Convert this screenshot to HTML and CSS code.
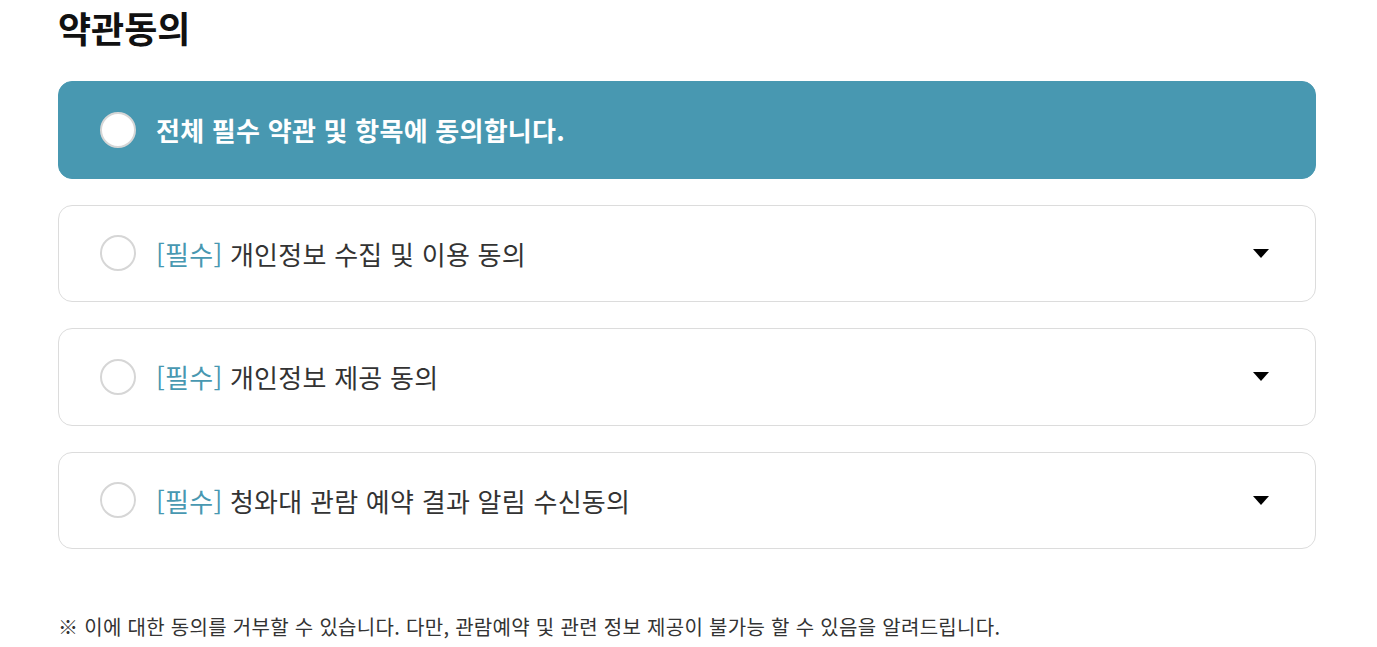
FILE: index.html
```html
<!DOCTYPE html>
<html lang="ko">
<head>
    <meta charset="UTF-8">
    <meta name="viewport" content="width=device-width, initial-scale=1.0">
    <title>약관동의</title>
    <link rel="stylesheet" href="styles.css">
</head>
<body>
    <div class="container">
        <h2 class="title">약관동의</h2>

        <div class="agree-list">
            <label class="agree-item all">
                <span class="check"></span>
                <span class="agree-text">전체 필수 약관 및 항목에 동의합니다.</span>
            </label>

            <div class="agree-item">
                <span class="check"></span>
                <span class="agree-text"><em>[필수]</em> 개인정보 수집 및 이용 동의</span>
                <span class="arrow"></span>
            </div>

            <div class="agree-item">
                <span class="check"></span>
                <span class="agree-text"><em>[필수]</em> 개인정보 제공 동의</span>
                <span class="arrow"></span>
            </div>

            <div class="agree-item">
                <span class="check"></span>
                <span class="agree-text"><em>[필수]</em> 청와대 관람 예약 결과 알림 수신동의</span>
                <span class="arrow"></span>
            </div>
        </div>

        <p class="notice">※ 이에 대한 동의를 거부할 수 있습니다. 다만, 관람예약 및 관련 정보 제공이 불가능 할 수 있음을 알려드립니다.</p>
    </div>
</body>
</html>
```

FILE: styles.css
```css
* {
    margin: 0;
    padding: 0;
    box-sizing: border-box;
}

body {
    font-family: 'Noto Sans CJK KR', 'Noto Sans', sans-serif;
    background: #fff;
    color: #222;
}

.container {
    width: 1258px;
    margin-left: 58px;
}

.title {
    font-size: 36px;
    font-weight: 700;
    color: #111;
    line-height: 54px;
    margin-bottom: 27px;
}

.agree-list {
    display: flex;
    flex-direction: column;
    gap: 26px;
}

.agree-item {
    display: flex;
    align-items: center;
    height: 97.5px;
    padding: 0 46px 0 41px;
    border: 1px solid #dcdcdc;
    border-radius: 14px;
    background: #fff;
}

.agree-item.all {
    background: #4898b1;
    border-color: #4898b1;
    cursor: pointer;
}

.check {
    width: 36px;
    height: 36px;
    flex: none;
    border-radius: 50%;
    border: 2px solid #d6d6d6;
    background: #fff;
    margin-right: 20px;
}

.agree-text {
    flex: 1;
    font-size: 26px;
    color: #333;
    letter-spacing: 0.25px;
}

.agree-item.all .agree-text {
    color: #fff;
    font-weight: 700;
}

.agree-text em {
    font-style: normal;
    color: #4898b1;
}

.arrow {
    width: 0;
    height: 0;
    border-left: 8px solid transparent;
    border-right: 8px solid transparent;
    border-top: 9px solid #000;
}

.notice {
    margin-top: 63px;
    font-size: 20px;
    color: #333;
    letter-spacing: 0.3px;
}
```
